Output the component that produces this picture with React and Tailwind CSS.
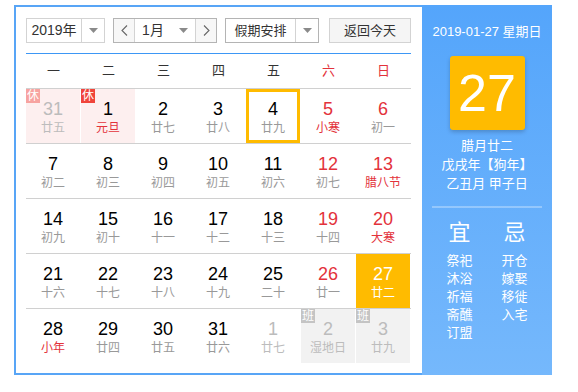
const FONT = '"Liberation Sans", "Noto Sans CJK SC", sans-serif';

const weekdays = [
  { label: "一" },
  { label: "二" },
  { label: "三" },
  { label: "四" },
  { label: "五" },
  { label: "六", red: true },
  { label: "日", red: true },
];

// other = day from prev/next month, badge: rest = 休, work = 班
const rows = [
  [
    { d: 31, l: "廿五", other: true, badge: "rest" },
    { d: 1, l: "元旦", fest: true, badge: "rest" },
    { d: 2, l: "廿七" },
    { d: 3, l: "廿八" },
    { d: 4, l: "廿九", selected: true },
    { d: 5, l: "小寒", fest: true },
    { d: 6, l: "初一" },
  ],
  [
    { d: 7, l: "初二" },
    { d: 8, l: "初三" },
    { d: 9, l: "初四" },
    { d: 10, l: "初五" },
    { d: 11, l: "初六" },
    { d: 12, l: "初七" },
    { d: 13, l: "腊八节", fest: true },
  ],
  [
    { d: 14, l: "初九" },
    { d: 15, l: "初十" },
    { d: 16, l: "十一" },
    { d: 17, l: "十二" },
    { d: 18, l: "十三" },
    { d: 19, l: "十四" },
    { d: 20, l: "大寒", fest: true },
  ],
  [
    { d: 21, l: "十六" },
    { d: 22, l: "十七" },
    { d: 23, l: "十八" },
    { d: 24, l: "十九" },
    { d: 25, l: "二十" },
    { d: 26, l: "廿一" },
    { d: 27, l: "廿二", today: true },
  ],
  [
    { d: 28, l: "小年", fest: true },
    { d: 29, l: "廿四" },
    { d: 30, l: "廿五" },
    { d: 31, l: "廿六" },
    { d: 1, l: "廿七", other: true },
    { d: 2, l: "湿地日", other: true, badge: "work" },
    { d: 3, l: "廿九", other: true, badge: "work" },
  ],
];

const yi = ["祭祀", "沐浴", "祈福", "斋醮", "订盟"];
const ji = ["开仓", "嫁娶", "移徙", "入宅"];

function Caret() {
  return (
    <svg width="9" height="5" viewBox="0 0 9 5">
      <path d="M0 0h9L4.5 5z" fill="#8a8a8a" />
    </svg>
  );
}

function Chevron({ dir }) {
  return (
    <svg width="7" height="11" viewBox="0 0 7 11">
      <path
        d={dir === "left" ? "M6 0.5L1 5.5l5 5" : "M1 0.5l5 5-5 5"}
        fill="none"
        stroke="#666"
        strokeWidth="1.1"
      />
    </svg>
  );
}

function DayCell({ c, col }) {
  const weekend = col >= 5;
  let bg = "";
  if (c.today) bg = "bg-[#ffbb00]";
  else if (c.badge === "rest") bg = "bg-[#fdefef]";
  else if (c.badge === "work") bg = "bg-[#f2f2f2]";

  let numColor = "text-black";
  if (c.today) numColor = "text-white";
  else if (c.other) numColor = "text-[#bcbcbc]";
  else if (weekend) numColor = "text-[#e3323b]";

  let lunarColor = "text-[#999]";
  if (c.today) lunarColor = "text-white";
  else if (c.other) lunarColor = "text-[#bcbcbc]";
  else if (c.fest) lunarColor = "text-[#e3323b]";

  return (
    <div className="w-[55px] h-[54px] pr-px">
      <div
        className={`relative h-full flex flex-col items-center ${bg} ${
          c.selected ? "border-[3px] border-[#ffbb00] pt-[7px]" : "pt-[10px]"
        }`}
      >
        {c.badge && (
          <span
            className={`absolute left-0 top-0 w-[14px] h-[14px] text-[12px] leading-[14px] text-white text-center ${
              c.badge === "work"
                ? "bg-[#c4c4c4]"
                : c.other
                ? "bg-[#f7a3a0]"
                : "bg-[#f0443a]"
            }`}
          >
            {c.badge === "work" ? "班" : "休"}
          </span>
        )}
        <span className={`text-[18px] leading-[21px] ${numColor}`}>{c.d}</span>
        <span className={`text-[12px] leading-[16px] ${lunarColor}`}>{c.l}</span>
      </div>
    </div>
  );
}

export default function App() {
  return (
    <div className="pl-[14px] pt-[5px] bg-white" style={{ fontFamily: FONT }}>
      <div className="flex h-[370px]">
        {/* calendar body */}
        <div className="w-[408px] border-l-2 border-t-2 border-b-2 border-[#58a5f6] pl-[10px] pr-[11px] pt-[11px]">
          <div className="flex items-center h-[25px] text-[13px] text-[#333]">
            <div className="flex w-[79px] h-[25px] border border-[#d3d3d3]">
              <span className="w-[54px] flex items-center justify-center text-[14px]">2019年</span>
              <span className="flex-1 flex items-center justify-center border-l border-[#d3d3d3]">
                <Caret />
              </span>
            </div>
            <div className="flex ml-[8px] w-[104px] h-[25px] border border-[#b4b4b4]">
              <span className="w-[21px] flex items-center justify-center bg-[#f7f7f7] border-r border-[#d3d3d3]">
                <Chevron dir="left" />
              </span>
              <span className="w-[36px] flex items-center justify-center text-[14px]">1月</span>
              <span className="w-[24px] flex items-center justify-center">
                <Caret />
              </span>
              <span className="flex-1 flex items-center justify-center bg-[#f7f7f7] border-l border-[#d3d3d3]">
                <Chevron dir="right" />
              </span>
            </div>
            <div className="flex ml-[8px] w-[94px] h-[25px] border border-[#b4b4b4]">
              <span className="w-[69px] flex items-center justify-center">假期安排</span>
              <span className="flex-1 flex items-center justify-center border-l border-[#d3d3d3]">
                <Caret />
              </span>
            </div>
            <div className="ml-[10px] w-[82px] h-[25px] flex items-center justify-center bg-[#f5f5f5] border border-[#d3d3d3]">
              返回今天
            </div>
          </div>

          <div className="mt-[10px] w-[385px] h-px bg-[#3d97f5]" />

          <div className="flex h-[34px] w-[385px]">
            {weekdays.map((w) => (
              <div
                key={w.label}
                className={`w-[55px] flex items-center justify-center text-[13px] ${
                  w.red ? "text-[#e3323b]" : "text-[#333]"
                }`}
              >
                {w.label}
              </div>
            ))}
          </div>

          {rows.map((row, i) => (
            <div key={i} className="flex w-[385px] border-t border-[#d0d0d0]">
              {row.map((c, j) => (
                <DayCell key={j} c={c} col={j} />
              ))}
            </div>
          ))}
        </div>

        {/* side panel */}
        <div className="w-[130px] h-[370px] flex flex-col items-center text-white bg-gradient-to-b from-[#54a5fb] to-[#75b8fc]">
          <div className="mt-[17px] h-[20px] leading-[20px] text-[13px]">2019-01-27 星期日</div>
          <div className="mt-[14px] w-[75px] h-[74px] rounded-[3px] bg-[#ffbb00] shadow-[0_2px_4px_rgba(0,0,0,0.2)] flex items-center justify-center text-[52px] leading-none">
            27
          </div>
          <div className="mt-[6px] text-[13px] leading-[19px] text-center">
            <div>腊月廿二</div>
            <div>戊戌年【狗年】</div>
            <div>乙丑月 甲子日</div>
          </div>
          <div className="mt-[13px] w-[110px] h-[2px] bg-white/30" />
          <div className="mt-[12px] flex gap-[15px]">
            <div className="w-[40px] flex flex-col items-center">
              <div className="text-[22px] leading-[26px]">宜</div>
              <div className="mt-[6px] text-[13px] leading-[18px] flex flex-col items-center">
                {yi.map((t) => (
                  <span key={t}>{t}</span>
                ))}
              </div>
            </div>
            <div className="w-[40px] flex flex-col items-center">
              <div className="text-[22px] leading-[26px]">忌</div>
              <div className="mt-[6px] text-[13px] leading-[18px] flex flex-col items-center">
                {ji.map((t) => (
                  <span key={t}>{t}</span>
                ))}
              </div>
            </div>
          </div>
        </div>
      </div>
    </div>
  );
}
